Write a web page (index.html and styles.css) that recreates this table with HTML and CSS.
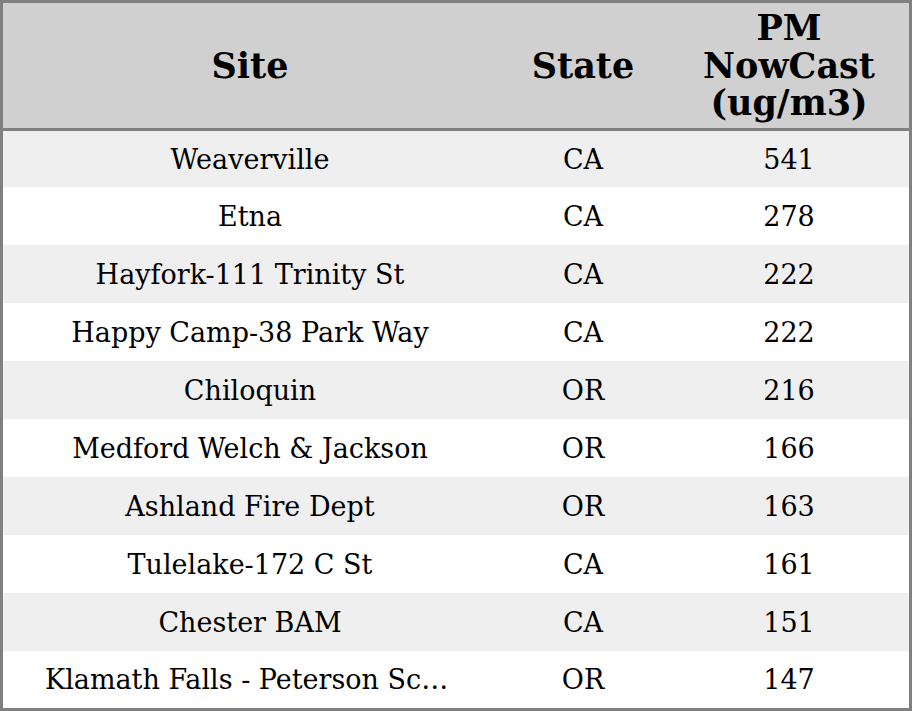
FILE: index.html
```html
<!DOCTYPE html>
<html>
<head>
<meta charset="utf-8">
<link rel="stylesheet" href="styles.css">
</head>
<body>
<table class="grid">
  <thead>
    <tr class="head">
      <th class="col-site">Site</th>
      <th class="col-state">State</th>
      <th class="col-pm">PM<br>NowCast<br>(ug/m3)</th>
    </tr>
  </thead>
  <tbody>
    <tr class="odd"><td><div class="name">Weaverville</div></td><td>CA</td><td>541</td></tr>
    <tr><td><div class="name">Etna</div></td><td>CA</td><td>278</td></tr>
    <tr class="odd"><td><div class="name">Hayfork-111 Trinity St</div></td><td>CA</td><td>222</td></tr>
    <tr><td><div class="name">Happy Camp-38 Park Way</div></td><td>CA</td><td>222</td></tr>
    <tr class="odd"><td><div class="name">Chiloquin</div></td><td>OR</td><td>216</td></tr>
    <tr><td><div class="name">Medford Welch &amp; Jackson</div></td><td>OR</td><td>166</td></tr>
    <tr class="odd"><td><div class="name">Ashland Fire Dept</div></td><td>OR</td><td>163</td></tr>
    <tr><td><div class="name">Tulelake-172 C St</div></td><td>CA</td><td>161</td></tr>
    <tr class="odd"><td><div class="name">Chester BAM</div></td><td>CA</td><td>151</td></tr>
    <tr class="last"><td><div class="name">Klamath Falls - Peterson School</div></td><td>OR</td><td>147</td></tr>
  </tbody>
</table>
</body>
</html>
```
FILE: styles.css
```css
html, body {
  margin: 0;
  padding: 0;
  background: #ffffff;
}
.grid {
  width: 912px;
  border-collapse: separate;
  border-spacing: 0;
  border: 3px solid #808080;
  table-layout: fixed;
  font-family: "DejaVu Serif", serif;
  color: #000;
}
.col-site { width: 494px; }
.col-state { width: 172px; }
.col-pm { width: 240px; }
.head th {
  background: #d0d0d0;
  height: 125px;
  padding: 0;
  font-size: 35px;
  font-weight: bold;
  line-height: 37.5px;
  text-align: center;
  vertical-align: middle;
  border-bottom: 3px solid #808080;
}
td {
  height: 58px;
  padding: 0;
  font-size: 27px;
  text-align: center;
  vertical-align: middle;
}
tbody tr:first-child td { height: 56px; }
tr.last td { height: 57px; }
tr.odd td { background: #efefef; }
.name {
  padding: 0 42px;
  white-space: nowrap;
  overflow: hidden;
  text-overflow: ellipsis;
}
```
